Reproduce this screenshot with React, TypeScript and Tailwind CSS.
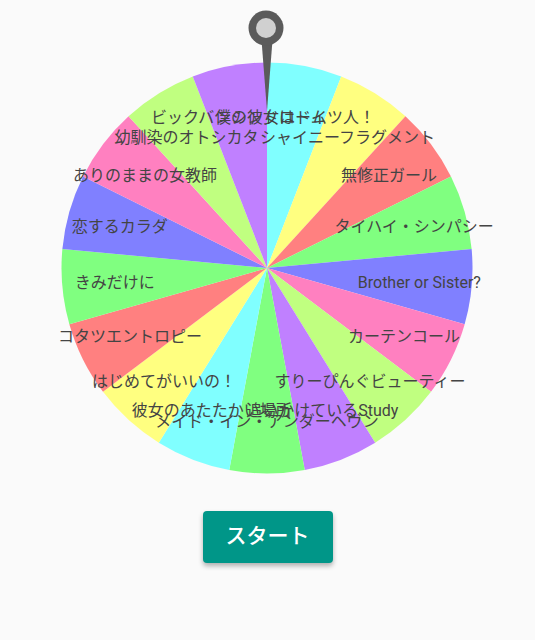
import React from 'react';

const LABELS = [
  '僕の彼女はドイツ人！',
  'シャイニーフラグメント',
  '無修正ガール',
  'タイハイ・シンパシー',
  'Brother or Sister?',
  'カーテンコール',
  'すりーぴんぐビューティー',
  '追いかけているStudy',
  'メイド・イン・アンダーヘヴン',
  '彼女のあたたかい場所',
  'はじめてがいいの！',
  'コタツエントロピー',
  'きみだけに',
  '恋するカラダ',
  'ありのままの女教師',
  '幼馴染のオトシカタ',
  'ビックバンシンドローム',
];

const COLORS = ['#80ffff', '#ffff80', '#ff8080', '#80ff80', '#8080ff', '#ff80c0', '#c0ff80', '#c080ff', '#80ff80'];

const CX = 267;
const CY = 268;
const R = 205.5;
const LABEL_R = 153;

function point(deg: number, r: number) {
  const a = (deg * Math.PI) / 180;
  return [CX + r * Math.sin(a), CY - r * Math.cos(a)];
}

function Wheel() {
  const n = LABELS.length;
  const step = 360 / n;

  return (
    <svg width="535" height="480" viewBox="0 0 535 480" className="block">
      {LABELS.map((_, i) => {
        const [x0, y0] = point(i * step, R);
        const [x1, y1] = point((i + 1) * step, R);
        return (
          <path
            key={i}
            d={`M ${CX} ${CY} L ${x0} ${y0} A ${R} ${R} 0 0 1 ${x1} ${y1} Z`}
            fill={COLORS[i % COLORS.length]}
          />
        );
      })}
      {LABELS.map((label, i) => {
        const [x, y] = point((i + 0.5) * step, LABEL_R);
        return (
          <text
            key={label}
            x={x}
            y={y}
            textAnchor="middle"
            dominantBaseline="central"
            fontSize="16"
            fill="#444444"
          >
            {label}
          </text>
        );
      })}
      {/* pointer */}
      <polygon points={`${CX - 5.5},40 ${CX + 5.5},40 ${CX},111`} fill="#5b5b5b" />
      <circle cx={CX - 1} cy="28" r="17.5" fill="#5b5b5b" />
      <circle cx={CX - 1} cy="28" r="10" fill="#d0d0d0" />
    </svg>
  );
}

export default function App() {
  return (
    <div
      className="min-h-screen bg-[#fafafa] flex flex-col items-center"
      style={{ fontFamily: 'Roboto, "Noto Sans CJK JP", sans-serif' }}
    >
      <Wheel />
      <button className="mt-[31px] w-[130px] h-[52px] rounded-[4px] bg-[#009688] text-white text-[21px] font-medium shadow-[0_3px_5px_rgba(0,0,0,0.3)]">
        スタート
      </button>
    </div>
  );
}
